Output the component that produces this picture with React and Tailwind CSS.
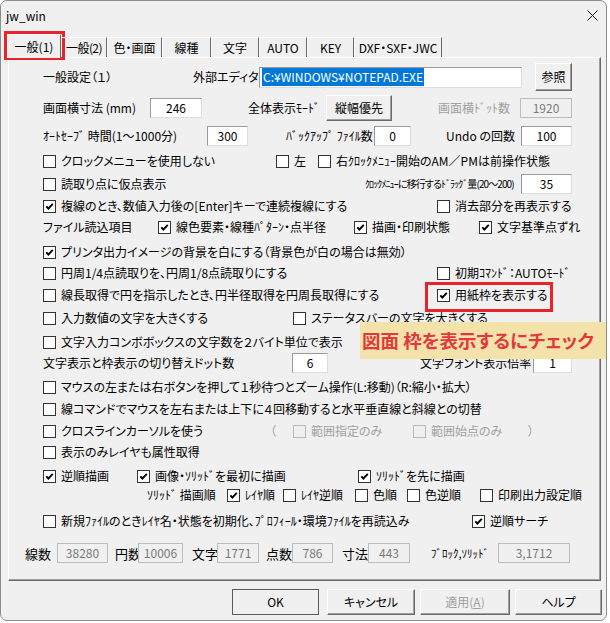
import React from 'react';

// jw_win settings dialog, 一般(1) tab

const FONT = "font-['Noto_Sans_CJK_JP','Noto_Sans',sans-serif] [font-feature-settings:'palt']";

function Box({ checked, disabled }) {
    return (
        <span
            className={`flex h-[13px] w-[13px] shrink-0 items-center justify-center border ${
                disabled ? 'border-[#b9b9b9] bg-[#f0f0f0]' : 'border-[#333333] bg-white'
            }`}
        >
            {checked && (
                <svg width="9" height="9" viewBox="0 0 9 9">
                    <path d="M1.3 4.3 L3.4 6.5 L7.8 1.9" fill="none" stroke="#000" strokeWidth="1.9" />
                </svg>
            )}
        </span>
    );
}

function Check({ checked, disabled, w = '', children }) {
    return (
        <div className={`flex shrink-0 items-center gap-[5px] whitespace-nowrap ${w} ${disabled ? 'text-[#a0a0a0]' : ''}`}>
            <Box checked={checked} disabled={disabled} />
            <span>{children}</span>
        </div>
    );
}

function Field({ value, w, disabled }) {
    return (
        <div
            className={`flex h-[20px] shrink-0 items-center justify-center border ${w} ${
                disabled
                    ? 'border-[#bcbcbc] bg-[#f0f0f0] text-[#7a7a7a]'
                    : 'border-t-[#9a9a9a] border-l-[#9a9a9a] border-r-[#dcdcdc] border-b-[#dcdcdc] bg-white'
            }`}
        >
            {value}
        </div>
    );
}

function Btn({ w, h = 'h-[26px]', disabled, primary, children }) {
    return (
        <div
            className={`flex shrink-0 items-center justify-center border bg-[#f0f0f0] ${w} ${h} ${
                primary
                    ? 'border-[#5a5a5a]'
                    : 'border-t-white border-l-white border-r-[#696969] border-b-[#696969] shadow-[inset_-1px_-1px_0_#a0a0a0]'
            } ${disabled ? 'text-[#a0a0a0]' : ''}`}
        >
            {children}
        </div>
    );
}

const tabs = [
    { label: '一般(2)', w: 'w-[46px] tracking-[-0.6px]' },
    { label: '色・画面', w: 'w-[55px]' },
    { label: '線種', w: 'w-[49px]' },
    { label: '文字', w: 'w-[48px]' },
    { label: 'AUTO', w: 'w-[48px]' },
    { label: 'KEY', w: 'w-[47px]' },
    { label: 'DXF・SXF・JWC', w: 'w-[88px]' },
];

function Row({ mt, pl = 'pl-[34px]', children }) {
    return <div className={`flex h-[20px] items-center whitespace-nowrap ${mt} ${pl}`}>{children}</div>;
}

export default function App() {
    return (
        <div className={`h-[623px] w-[610px] bg-white text-[12px] leading-none text-black ${FONT}`}>
            <div className="relative h-[621px] w-[607px] overflow-hidden rounded-[7px] border border-[#8c8c8c] bg-[#f0f0f0]">
                {/* Title bar */}
                <div className="flex h-[29px] items-center justify-between pl-[5px] pr-[8px]">
                    <span className="text-[12px]">jw_win</span>
                    <svg width="11" height="11" viewBox="0 0 11 11">
                        <path d="M0.5 0.5 L10.5 10.5 M10.5 0.5 L0.5 10.5" stroke="#111" strokeWidth="1" />
                    </svg>
                </div>

                {/* Tabs */}
                <div className="relative z-10 flex h-[27px] items-end pl-[6px]">
                    <div className="-mb-[1px] flex h-[24px] w-[54px] items-center justify-center border-t border-l border-r border-t-white border-l-white border-r-[#696969] bg-[#f0f0f0]">
                        一般(1)
                    </div>
                    {tabs.map((t) => (
                        <div
                            key={t.label}
                            className={`flex h-[20px] items-center justify-center whitespace-nowrap border-t border-l border-r border-t-white border-l-white border-r-[#696969] ${t.w}`}
                        >
                            {t.label}
                        </div>
                    ))}
                </div>

                {/* Panel */}
                <div className="ml-[7px] h-[524px] w-[593px] border border-t-white border-l-white border-r-[#696969] border-b-[#696969] pt-[9px] shadow-[inset_-1px_-1px_0_#a0a0a0]">
                    <Row mt="">
                        <span className="w-[150px]">一般設定（１）</span>
                        <span className="w-[66px] pr-[3px] text-right">外部エディタ</span>
                        <div className="flex h-[21px] w-[263px] shrink-0 items-center border border-t-[#9a9a9a] border-l-[#9a9a9a] border-r-[#dcdcdc] border-b-[#dcdcdc] bg-white pl-[2px]">
                            <span className="bg-[#0078d7] px-[1px] py-[3px] text-white">C:¥WINDOWS¥NOTEPAD.EXE</span>
                        </div>
                        <div className="ml-[13px]">
                            <Btn w="w-[37px]" h="h-[28px]">参照</Btn>
                        </div>
                    </Row>

                    <Row mt="mt-[11px]">
                        <span className="w-[107px]">画面横寸法 (mm)</span>
                        <Field value="246" w="w-[52px]" />
                        <span className="w-[46px]" />
                        <span className="w-[78px]">全体表示ﾓｰﾄﾞ</span>
                        <Btn w="w-[66px]">縦幅優先</Btn>
                        <span className="w-[46px]" />
                        <span className="w-[82px] text-[#a0a0a0]">画面横ﾄﾞｯﾄ数</span>
                        <Field value="1920" w="w-[52px]" disabled />
                    </Row>

                    <Row mt="mt-[8px]">
                        <span className="w-[164px]">ｵｰﾄｾｰﾌﾞ 時間(1〜1000分)</span>
                        <Field value="300" w="w-[41px]" />
                        <span className="w-[38px]" />
                        <span className="w-[88px]">ﾊﾞｯｸｱｯﾌﾟ ﾌｧｲﾙ数</span>
                        <Field value="0" w="w-[37px]" />
                        <span className="w-[35px]" />
                        <span className="w-[75px]">Undo の回数</span>
                        <Field value="100" w="w-[51px]" />
                    </Row>

                    <Row mt="mt-[5px]">
                        <Check w="w-[233px]">クロックメニューを使用しない</Check>
                        <Check w="w-[42px]">左</Check>
                        <Check>右ｸﾛｯｸﾒﾆｭｰ開始のAM／PMは前操作状態</Check>
                    </Row>

                    <Row mt="mt-[3px]">
                        <Check w="w-[322px]">読取り点に仮点表示</Check>
                        <span className="w-[156px] text-[10px] tracking-[-0.9px]">ｸﾛｯｸﾒﾆｭｰに移行するﾄﾞﾗｯｸﾞ量(20〜200)</span>
                        <Field value="35" w="w-[51px]" />
                    </Row>

                    <Row mt="mt-[2px]">
                        <Check w="w-[394px]" checked>
                            複線のとき、数値入力後の[Enter]キーで連続複線にする
                        </Check>
                        <Check>消去部分を再表示する</Check>
                    </Row>

                    <Row mt="mt-[1px]">
                        <span className="w-[115px]">ファイル読込項目</span>
                        <Check w="w-[196px]" checked>
                            線色要素・線種ﾊﾟﾀｰﾝ・点半径
                        </Check>
                        <Check w="w-[125px]" checked>
                            描画・印刷状態
                        </Check>
                        <Check checked>文字基準点ずれ</Check>
                    </Row>

                    <Row mt="mt-[5px]">
                        <Check checked>プリンタ出力イメージの背景を白にする（背景色が白の場合は無効）</Check>
                    </Row>

                    <Row mt="mt-[1px]">
                        <Check w="w-[394px]">円周1/4点読取りを、円周1/8点読取りにする</Check>
                        <Check>初期ｺﾏﾝﾄﾞ：AUTOﾓｰﾄﾞ</Check>
                    </Row>

                    <Row mt="mt-[2px]">
                        <Check w="w-[394px]">線長取得で円を指示したとき、円半径取得を円周長取得にする</Check>
                        <Check checked>用紙枠を表示する</Check>
                    </Row>

                    <Row mt="mt-[3px]">
                        <Check w="w-[250px]">入力数値の文字を大きくする</Check>
                        <Check>ステータスバーの文字を大きくする</Check>
                    </Row>

                    <Row mt="mt-[4px]">
                        <Check>文字入力コンボボックスの文字数を２バイト単位で表示</Check>
                    </Row>

                    <Row mt="mt-[1px]">
                        <span className="w-[249px]">文字表示と枠表示の切り替えドット数</span>
                        <Field value="6" w="w-[36px]" />
                        <span className="w-[92px]" />
                        <span className="w-[113px]">文字フォント表示倍率</span>
                        <Field value="1" w="w-[39px]" />
                    </Row>

                    <Row mt="mt-[4px]">
                        <Check>マウスの左または右ボタンを押して１秒待つとズーム操作(L:移動)（R:縮小・拡大）</Check>
                    </Row>

                    <Row mt="mt-[2px]">
                        <Check>線コマンドでマウスを左右または上下に４回移動すると水平垂直線と斜線との切替</Check>
                    </Row>

                    <Row mt="mt-[2px]">
                        <Check w="w-[227px]">クロスラインカーソルを使う</Check>
                        <span className="w-[23px] text-[#a0a0a0]">（</span>
                        <Check w="w-[120px]" disabled>
                            範囲指定のみ
                        </Check>
                        <Check w="w-[115px]" disabled>
                            範囲始点のみ
                        </Check>
                        <span className="text-[#a0a0a0]">）</span>
                    </Row>

                    <Row mt="mt-[1px]">
                        <Check>表示のみレイヤも属性取得</Check>
                    </Row>

                    <Row mt="mt-[4px]">
                        <Check w="w-[94px]" checked>
                            逆順描画
                        </Check>
                        <Check w="w-[221px]" checked>
                            画像・ｿﾘｯﾄﾞを最初に描画
                        </Check>
                        <Check checked>ｿﾘｯﾄﾞを先に描画</Check>
                    </Row>

                    <Row mt="-mt-[1px]" pl="pl-[138px]">
                        <span className="w-[80px]">ｿﾘｯﾄﾞ 描画順</span>
                        <Check w="w-[56px]" checked>
                            ﾚｲﾔ順
                        </Check>
                        <Check w="w-[72px]">ﾚｲﾔ逆順</Check>
                        <Check w="w-[52px]">色順</Check>
                        <Check w="w-[73px]">色逆順</Check>
                        <Check>印刷出力設定順</Check>
                    </Row>

                    <Row mt="mt-[6px]">
                        <Check w="w-[429px]">新規ﾌｧｲﾙのときﾚｲﾔ名・状態を初期化、ﾌﾟﾛﾌｨｰﾙ・環境ﾌｧｲﾙを再読込み</Check>
                        <Check checked>逆順サーチ</Check>
                    </Row>

                    <Row mt="mt-[12px]" pl="pl-[16px]">
                        <span className="w-[32px] text-[13px]">線数</span>
                        <Field value="38280" w="w-[51px]" disabled />
                        <span className="w-[30px] pl-[7px] text-[13px]">円数</span>
                        <Field value="10006" w="w-[45px]" disabled />
                        <span className="w-[34px] pl-[9px] text-[13px]">文字</span>
                        <Field value="1771" w="w-[42px]" disabled />
                        <span className="w-[33px] pl-[7px] text-[13px]">点数</span>
                        <Field value="786" w="w-[41px]" disabled />
                        <span className="w-[35px] pl-[9px] text-[13px]">寸法</span>
                        <Field value="443" w="w-[42px]" disabled />
                        <span className="w-[88px] pl-[21px] text-[11px]">ﾌﾞﾛｯｸ,ｿﾘｯﾄﾞ</span>
                        <Field value="3,1712" w="w-[72px]" disabled />
                    </Row>
                </div>

                {/* Dialog buttons */}
                <div className="mt-[8px] flex pl-[231px]">
                    <Btn w="w-[87px]" primary>
                        OK
                    </Btn>
                    <div className="ml-[8px]">
                        <Btn w="w-[88px]">キャンセル</Btn>
                    </div>
                    <div className="ml-[5px]">
                        <Btn w="w-[90px]" disabled>
                            適用(<span className="underline">A</span>)
                        </Btn>
                    </div>
                    <div className="ml-[5px]">
                        <Btn w="w-[87px]">ヘルプ</Btn>
                    </div>
                </div>

                {/* Annotation overlays */}
                <div className="absolute left-[3px] top-[30px] h-[29px] w-[61px] border-[3px] border-[#e8242a]" />
                <div className="absolute left-[424px] top-[281px] h-[30px] w-[128px] border-[3px] border-[#e8242a]" />
                <div className="absolute left-[359px] top-[321px] flex h-[37px] w-[248px] items-center whitespace-nowrap bg-[#f3e2aa] pl-[2px] text-[18.5px] font-bold text-[#e23a3c]">
                    図面 枠を表示するにチェック
                </div>
            </div>
        </div>
    );
}
